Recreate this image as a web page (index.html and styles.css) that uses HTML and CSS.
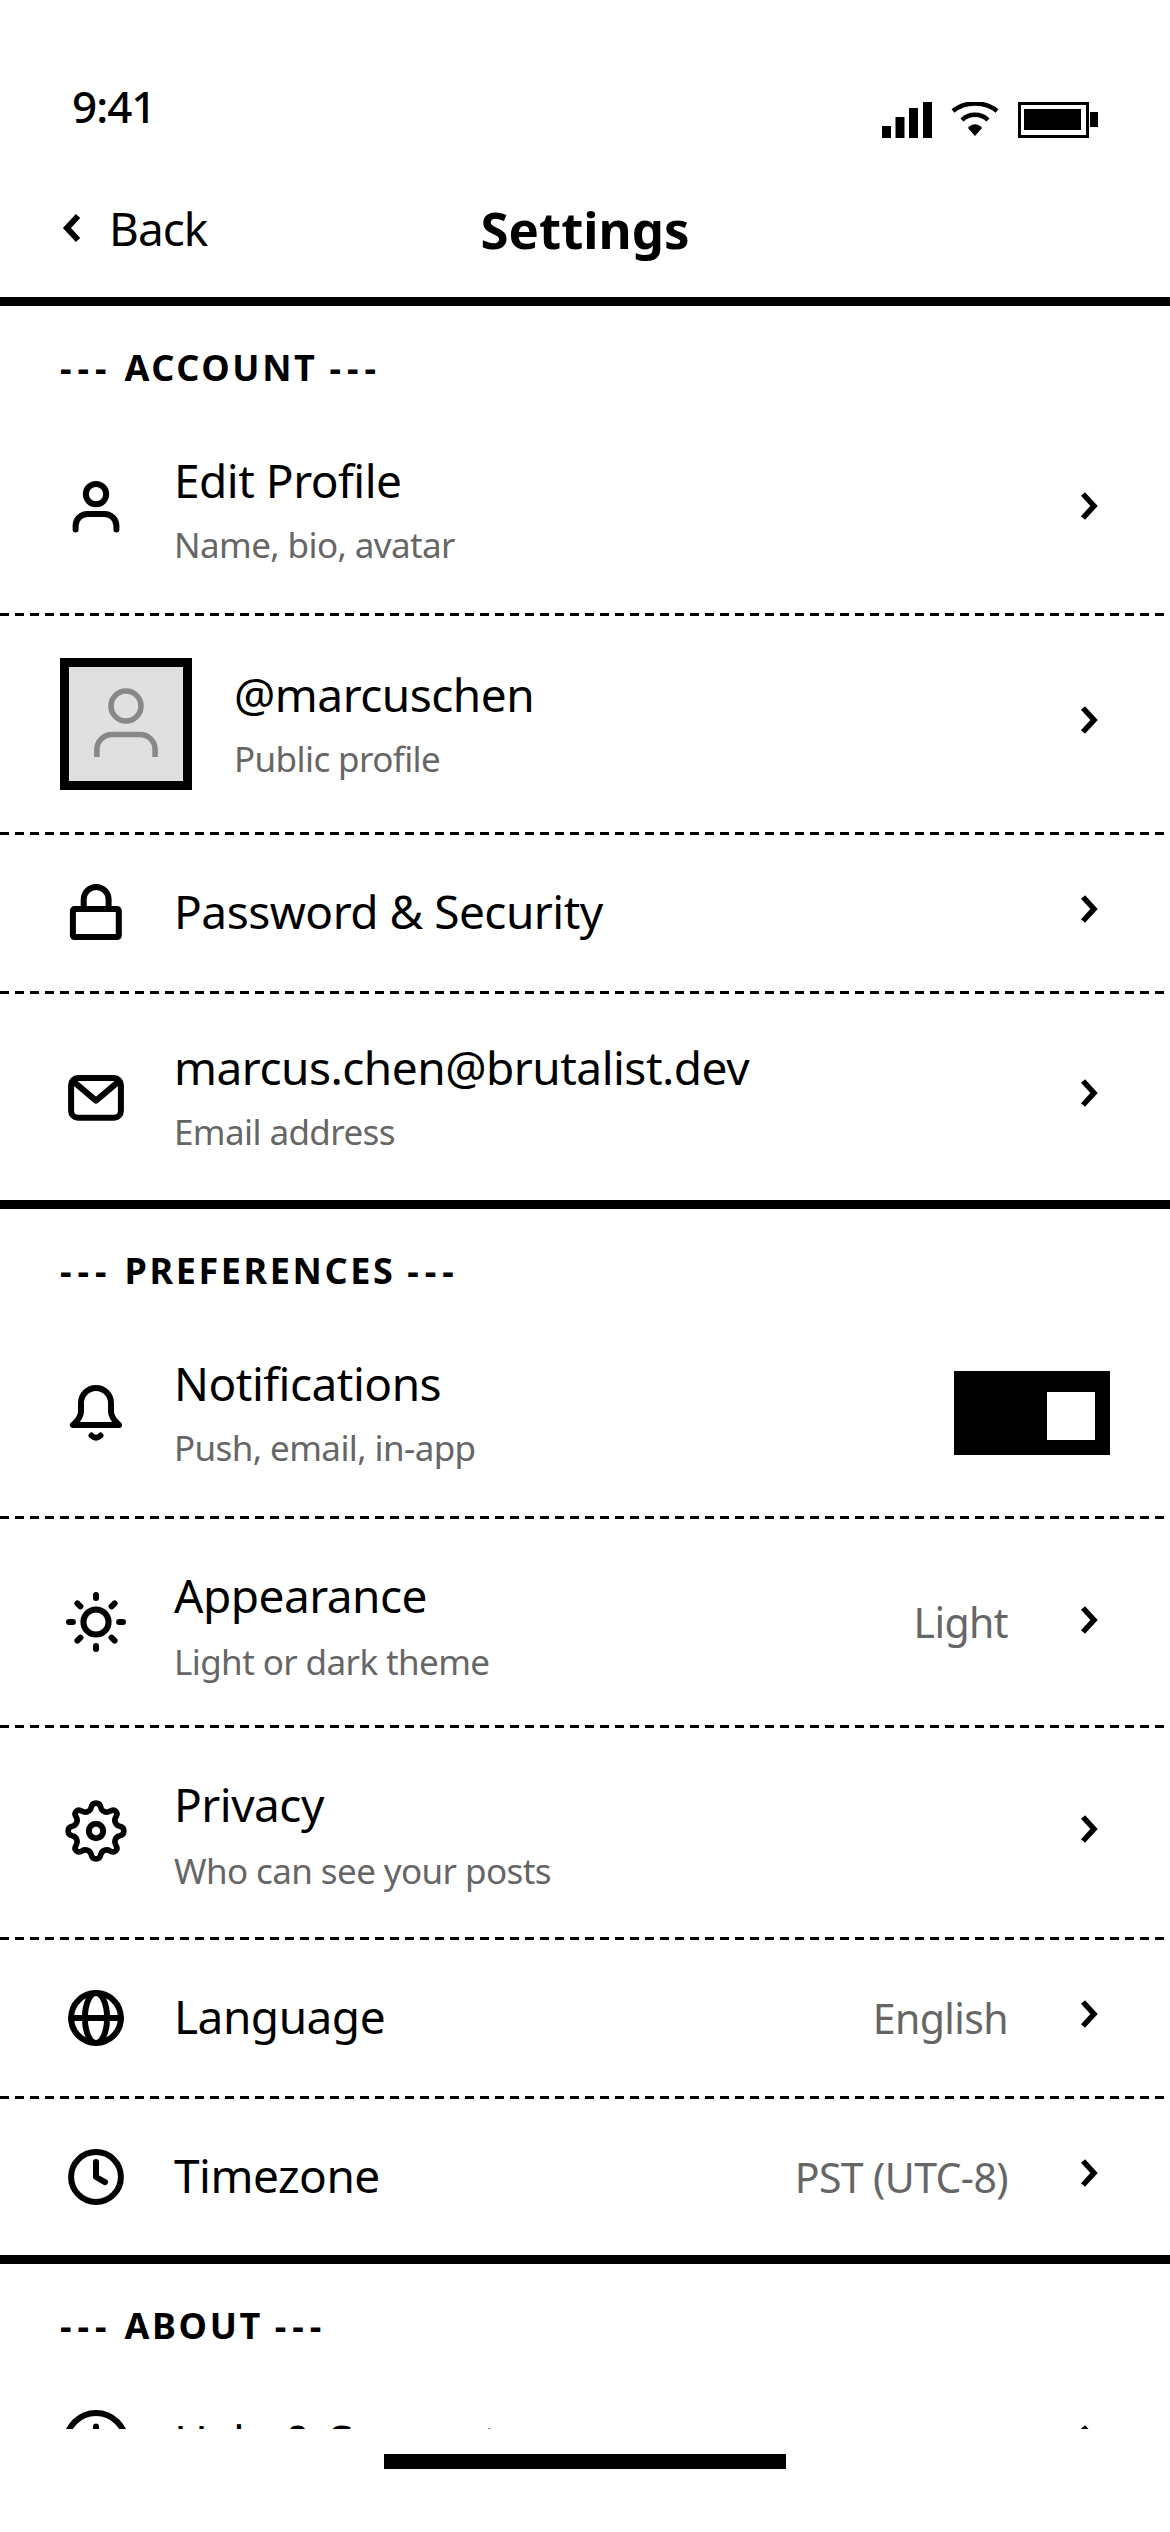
FILE: index.html
```html
<!DOCTYPE html>
<html lang="en">
    <head>
        <meta charset="UTF-8" />
        <meta name="viewport" content="width=device-width, initial-scale=1.0" />
        <title>Settings</title>
        <link rel="stylesheet" href="styles.css">
    </head>
    <body>
        <div id="screen">
            <!-- Status bar -->
            <div class="status-bar">
                <span class="time">9:41</span>
                <div class="status-icons">
                    <svg width="50" height="36" viewBox="0 0 50 36" fill="#000">
                        <rect x="0" y="24" width="9" height="12" />
                        <rect x="13.5" y="15" width="9" height="21" />
                        <rect x="27" y="6" width="9" height="30" />
                        <rect x="41" y="0" width="9" height="36" />
                    </svg>
                    <svg width="48" height="36" viewBox="0 0 48 36" fill="none" stroke="#000" stroke-width="4.5">
                        <path d="M2 9 C14 -1 34 -1 46 9" />
                        <path d="M11 18 C18 11 30 11 37 18" />
                        <path d="M17 26 C21 21 27 21 31 26 L24 34 Z" fill="#000" stroke="none" />
                    </svg>
                    <svg width="80" height="36" viewBox="0 0 80 36">
                        <rect x="1.5" y="1.5" width="68" height="33" fill="#fff" stroke="#000" stroke-width="3" />
                        <rect x="6" y="7" width="57" height="21" fill="#000" />
                        <rect x="72" y="10" width="8" height="15" fill="#000" />
                    </svg>
                </div>
            </div>

            <!-- Nav -->
            <div class="nav">
                <div class="back">
                    <svg class="back-chevron" width="24" height="36" viewBox="0 0 24 36" fill="none" stroke="#000" stroke-width="6">
                        <path d="M18 6 L7 18 L18 30" />
                    </svg>
                    <span>Back</span>
                </div>
                <div class="nav-title">Settings</div>
            </div>

            <div class="content">
                <div class="section-label"><span class="dashes">---</span> ACCOUNT <span class="dashes">---</span></div>

                <div class="row">
                    <svg class="icon" viewBox="0 0 24 24"><circle cx="12" cy="6.700" r="3.400" /><path d="M5.200 18.500 V17.300 A4 4 0 0 1 9.200 13.300 H14.800 A4 4 0 0 1 18.800 17.300 V18.500" /></svg>
                    <div class="row-text">
                        <div class="row-title">Edit Profile</div>
                        <div class="row-sub">Name, bio, avatar</div>
                    </div>
                    <svg class="chevron" viewBox="0 0 24 36"><path d="M6 6 L17 18 L6 30" /></svg>
                </div>

                <div class="row">
                    <div class="avatar">
                        <svg class="avatar-icon" viewBox="0 0 24 24"><circle cx="12" cy="6" r="5" /><path d="M2.300 23 V20.500 A5 5 0 0 1 7.300 15.500 H16.700 A5 5 0 0 1 21.700 20.500 V23" /></svg>
                    </div>
                    <div class="row-text">
                        <div class="row-title">@marcuschen</div>
                        <div class="row-sub">Public profile</div>
                    </div>
                    <svg class="chevron" viewBox="0 0 24 36"><path d="M6 6 L17 18 L6 30" /></svg>
                </div>

                <div class="row">
                    <svg class="icon" viewBox="0 0 24 24"><rect x="4.300" y="10.700" width="15.300" height="9.300" rx="0.500" /><path d="M7.900 10.700 V7.450 A4.150 4.150 0 0 1 16.200 7.450 V10.700" /></svg>
                    <div class="row-text">
                        <div class="row-title">Password &amp; Security</div>
                    </div>
                    <svg class="chevron" viewBox="0 0 24 36"><path d="M6 6 L17 18 L6 30" /></svg>
                </div>

                <div class="row row-last">
                    <svg class="icon" viewBox="0 0 24 24"><rect x="3.700" y="5.700" width="16.600" height="13.200" rx="2.300" /><path d="M5 7.300 L12 13.200 L19 7.300" /></svg>
                    <div class="row-text">
                        <div class="row-title">marcus.chen@brutalist.dev</div>
                        <div class="row-sub">Email address</div>
                    </div>
                    <svg class="chevron" viewBox="0 0 24 36"><path d="M6 6 L17 18 L6 30" /></svg>
                </div>

                <div class="section-label"><span class="dashes">---</span> PREFERENCES <span class="dashes">---</span></div>

                <div class="row">
                    <svg class="icon" viewBox="0 0 24 24"><path d="M4.300 16 H19.700 C18 14.500 17 13 17 11.500 V8.700 A5 5 0 0 0 7 8.700 V11.500 C7 13 6 14.500 4.300 16 Z" /><path d="M10.500 19.500 Q12 21 13.500 19.500" /></svg>
                    <div class="row-text">
                        <div class="row-title">Notifications</div>
                        <div class="row-sub">Push, email, in-app</div>
                    </div>
                    <div class="toggle"><div class="knob"></div></div>
                </div>

                <div class="row row-low">
                    <svg class="icon" viewBox="0 0 24 24"><circle cx="12" cy="12" r="4.200" /><path d="M12 3 V4 M12 20 V21 M3 12 H4.300 M19.700 12 H21 M5.800 5.800 L6.800 6.800 M17.200 17.200 L18.200 18.200 M5.800 18.200 L6.800 17.200 M17.200 6.800 L18.200 5.800" /></svg>
                    <div class="row-text">
                        <div class="row-title">Appearance</div>
                        <div class="row-sub">Light or dark theme</div>
                    </div>
                    <span class="row-value">Light</span>
                    <svg class="chevron" viewBox="0 0 24 36"><path d="M6 6 L17 18 L6 30" /></svg>
                </div>

                <div class="row row-low row-tall">
                    <svg class="icon" viewBox="0 0 24 24"><circle cx="12" cy="12" r="2.400" /><path transform="translate(12 12) scale(0.93) translate(-12 -12)" d="M10.300 3.500 C10.700 1.500 13.300 1.500 13.700 3.500 C14 5 15.700 5.700 17 4.900 C18.700 3.800 20.200 5.300 19.100 7 C18.300 8.300 19 10 20.500 10.300 C22.500 10.700 22.500 13.300 20.500 13.700 C19 14 18.300 15.700 19.100 17 C20.200 18.700 18.700 20.200 17 19.100 C15.700 18.300 14 19 13.700 20.500 C13.300 22.500 10.700 22.500 10.300 20.500 C10 19 8.300 18.300 7 19.100 C5.300 20.200 3.800 18.700 4.900 17 C5.700 15.700 5 14 3.500 13.700 C1.500 13.300 1.500 10.700 3.500 10.300 C5 10 5.700 8.300 4.900 7 C3.800 5.300 5.300 3.800 7 4.900 C8.300 5.700 10 5 10.300 3.500 Z" /></svg>
                    <div class="row-text">
                        <div class="row-title">Privacy</div>
                        <div class="row-sub">Who can see your posts</div>
                    </div>
                    <svg class="chevron" viewBox="0 0 24 36"><path d="M6 6 L17 18 L6 30" /></svg>
                </div>

                <div class="row">
                    <svg class="icon" viewBox="0 0 24 24"><circle cx="12" cy="12" r="8.300" /><path d="M3.700 12 H20.300" /><ellipse cx="12" cy="12" rx="3.700" ry="8.300" /></svg>
                    <div class="row-text">
                        <div class="row-title">Language</div>
                    </div>
                    <span class="row-value">English</span>
                    <svg class="chevron" viewBox="0 0 24 36"><path d="M6 6 L17 18 L6 30" /></svg>
                </div>

                <div class="row row-last">
                    <svg class="icon" viewBox="0 0 24 24"><circle cx="12" cy="12" r="8.300" /><path d="M12 7 V12 L15 13.700" /></svg>
                    <div class="row-text">
                        <div class="row-title">Timezone</div>
                    </div>
                    <span class="row-value">PST (UTC-8)</span>
                    <svg class="chevron" viewBox="0 0 24 36"><path d="M6 6 L17 18 L6 30" /></svg>
                </div>

                <div class="section-label"><span class="dashes">---</span> ABOUT <span class="dashes">---</span></div>

                <div class="row">
                    <svg class="icon" viewBox="0 0 24 24"><circle cx="12" cy="12" r="10" /><path d="M12 6.500 V7.500 M12 11 V17" /></svg>
                    <div class="row-text">
                        <div class="row-title">Help &amp; Support</div>
                    </div>
                    <svg class="chevron" viewBox="0 0 24 36"><path d="M6 6 L17 18 L6 30" /></svg>
                </div>
            </div>

            <div class="home-area"><div class="home-bar"></div></div>
        </div>
    </body>
</html>
```
FILE: styles.css
```css
* {
    box-sizing: border-box;
}

body {
    font-family: "Noto Sans", sans-serif;
    background-color: #fff;
    color: #000;
    margin: 0;
    padding: 0;
}

#screen {
    display: flex;
    flex-direction: column;
    height: 2532px;
    width: 1170px;
    overflow: hidden;
}

.status-bar {
    height: 162px;
    padding: 71px 72px 0 72px;
    display: flex;
    justify-content: space-between;
    align-items: flex-start;
}

.time {
    font-size: 44px;
    line-height: 70px;
    font-weight: 500;
    letter-spacing: -1px;
}

.status-icons {
    display: flex;
    gap: 19px;
    align-items: center;
    margin-top: 31px;
}

.nav {
    position: relative;
    height: 144px;
    border-bottom: 9px solid #000;
    display: flex;
    align-items: center;
    justify-content: center;
    padding-bottom: 2px;
}

.back {
    position: absolute;
    left: 60px;
    top: 33px;
    display: flex;
    align-items: center;
    gap: 25px;
    font-size: 46px;
    line-height: 66px;
    letter-spacing: -1px;
}

.nav-title {
    font-size: 51px;
    font-weight: 700;
    line-height: 66px;
}

.content {
    flex: 1;
    min-height: 0;
    overflow: hidden;
}

.section-label {
    padding: 36px 60px 13px 60px;
    font-size: 36px;
    line-height: 52px;
    font-weight: 700;
    letter-spacing: 2.600px;
}

.dashes {
    letter-spacing: 6px;
}

/* dashed divider drawn as a gradient so dash length matches */
.row {
    display: flex;
    align-items: center;
    padding: 42px 60px 45px 60px;
    background: repeating-linear-gradient(90deg, #000 0, #000 9px, transparent 9px, transparent 15px) left bottom / 100% 3px no-repeat;
}

.row-tall {
    padding-bottom: 48px;
}

.row-last {
    padding-bottom: 42px;
    background: none;
    border-bottom: 9px solid #000;
}

/* these two rows sit a little lower next to the icon */
.row-low .row-text {
    margin-top: 5px;
    margin-bottom: -5px;
}

.row-low .row-title {
    line-height: 59px;
}

.row-low .row-sub {
    margin-top: 11px;
}

.row-low .chevron {
    margin-bottom: 4px;
}

.icon {
    width: 72px;
    height: 72px;
    flex-shrink: 0;
    fill: none;
    stroke: #000;
    stroke-width: 2;
    stroke-linecap: round;
    stroke-linejoin: round;
}

.avatar {
    width: 132px;
    height: 132px;
    border: 9px solid #000;
    background-color: #e0e0e0;
    display: flex;
    align-items: center;
    justify-content: center;
    flex-shrink: 0;
}

.avatar-icon {
    width: 72px;
    height: 72px;
    fill: none;
    stroke: #888;
    stroke-width: 1.850;
}

.row-text {
    flex: 1;
    min-width: 0;
    margin-left: 42px;
}

.row-title {
    font-size: 46px;
    line-height: 63px;
    letter-spacing: -0.5px;
}

/* single line rows read slightly above centre */
.row-title:only-child {
    margin-bottom: 3px;
}

.row-sub {
    font-size: 35px;
    line-height: 52px;
    margin-top: 7px;
    letter-spacing: -0.6px;
    color: #666;
}

.row-value {
    font-size: 41px;
    line-height: 60px;
    letter-spacing: -0.6px;
    color: #666;
    margin-right: 54px;
}

.chevron {
    width: 24px;
    height: 36px;
    margin: 0 9px 8px 15px;
    flex-shrink: 0;
    fill: none;
    stroke: #000;
    stroke-width: 5.500;
}

.toggle {
    width: 156px;
    height: 84px;
    background-color: #000;
    display: flex;
    align-items: center;
    justify-content: flex-end;
    padding-right: 15px;
}

.knob {
    width: 48px;
    height: 48px;
    margin-top: 6px;
    background-color: #fff;
}

.home-area {
    height: 103px;
    flex-shrink: 0;
    background-color: #fff;
    padding-top: 25px;
}

.home-bar {
    width: 402px;
    height: 15px;
    background-color: #000;
    margin: 0 auto;
}
```
